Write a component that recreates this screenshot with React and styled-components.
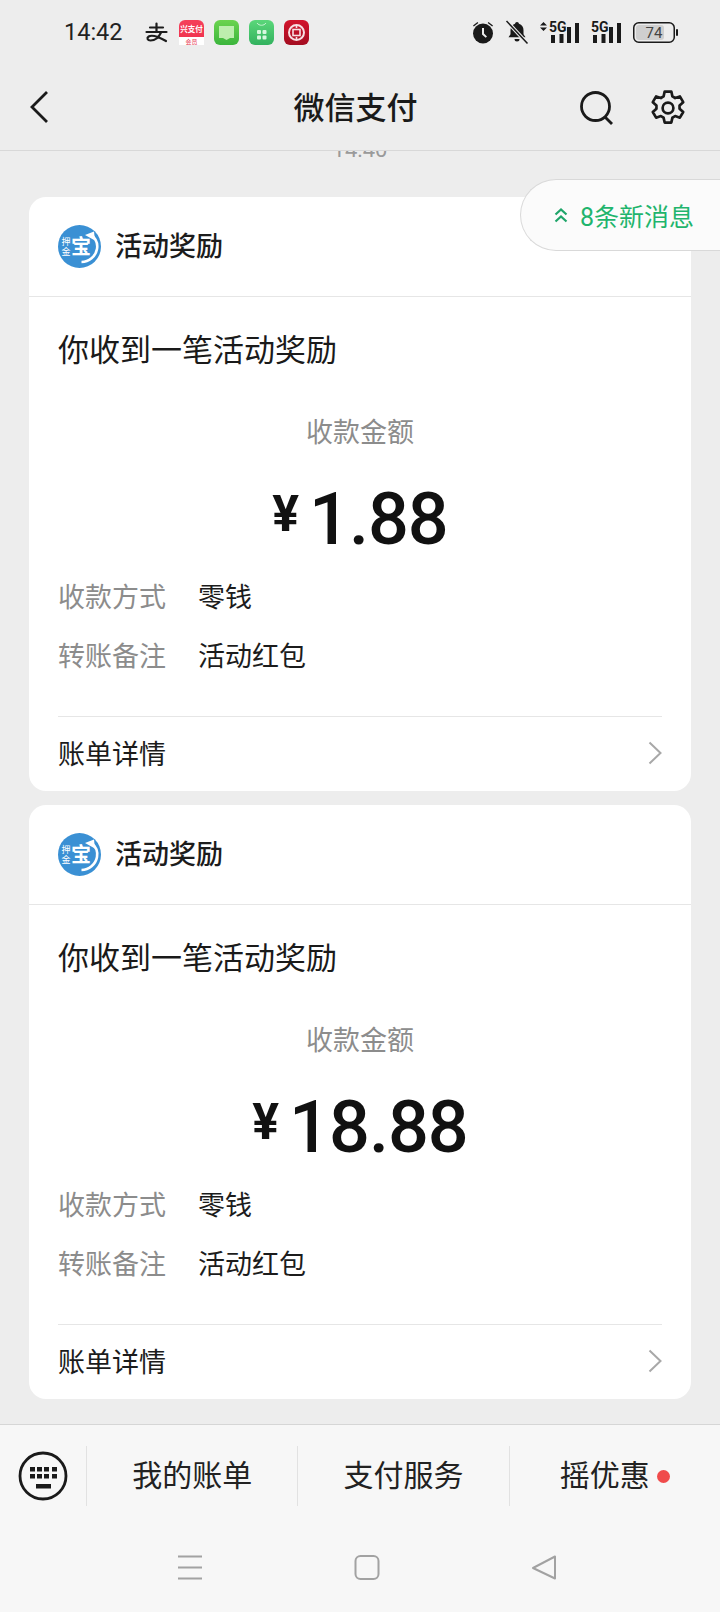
import React from 'react';
import styled, { createGlobalStyle } from 'styled-components';

const FONT = `Roboto, "Noto Sans CJK SC", sans-serif`;

const GlobalStyle = createGlobalStyle`
  html, body {
    margin: 0;
    padding: 0;
    background: #ededed;
  }
  * {
    box-sizing: border-box;
  }
`;

const Screen = styled.div`
  display: flex;
  flex-direction: column;
  width: 720px;
  height: 1612px;
  overflow: hidden;
  position: relative;
  background: #ededed;
  color: #1a1a1a;
  font-family: ${FONT};
`;

const StatusBar = styled.div`
  display: flex;
  align-items: center;
  flex: none;
  height: 64px;
  padding: 0 41px 0 64px;
`;

const Clock = styled.span`
  font-size: 23.5px;
  line-height: 28px;
  width: 80px;
  color: #222;
`;

const AppIcons = styled.div`
  display: flex;
  align-items: center;
  gap: 10px;
`;

const SysIcons = styled.div`
  display: flex;
  align-items: center;
  gap: 11px;
  margin-left: auto;
`;

const NavBar = styled.header`
  display: flex;
  align-items: center;
  flex: none;
  height: 87px;
  padding: 0 33px 0 27px;
  border-bottom: 1px solid #d8d8d8;
`;

const NavTitle = styled.h1`
  flex: 1;
  margin: 3px 0 0;
  padding-left: 81px;
  font-size: 31px;
  font-weight: 500;
  line-height: 40px;
  text-align: center;
  color: #1a1a1a;
`;

const NavActions = styled.div`
  display: flex;
  align-items: center;
  gap: 34px;
  margin-top: 2px;
`;

const Messages = styled.main`
  display: flex;
  flex-direction: column;
  flex: 1;
  min-height: 0;
  gap: 14px;
  padding: 0 29px;
  overflow: hidden;
`;

const Timestamp = styled.div`
  flex: none;
  height: 30px;
  margin-top: -16px;
  margin-bottom: 18px;
  font-size: 22px;
  line-height: 30px;
  text-align: center;
  color: #9a9a9a;
`;

const Card = styled.article`
  flex: none;
  height: 594px;
  border-radius: 17px;
  background: #fff;
`;

const CardHead = styled.div`
  display: flex;
  align-items: center;
  gap: 14px;
  height: 100px;
  padding: 0 29px;
  border-bottom: 1px solid #e6e6e6;
`;

const CardName = styled.span`
  font-size: 27px;
  font-weight: 500;
  line-height: 36px;
  color: #1c1c1c;
`;

const CardBody = styled.div`
  display: flex;
  flex-direction: column;
  height: 419px;
  padding: 33px 29px 0;
`;

const Headline = styled.div`
  font-size: 31px;
  line-height: 42px;
  color: #1a1a1a;
`;

const AmountLabel = styled.div`
  margin-top: 43px;
  font-size: 27px;
  line-height: 36px;
  text-align: center;
  color: #8c8c8c;
`;

const AmountRow = styled.div`
  display: flex;
  align-items: center;
  justify-content: center;
  gap: 10px;
  height: 86px;
  margin-top: 26px;
`;

const Yen = styled.span`
  font-size: 50px;
  font-weight: 700;
  line-height: 50px;
  margin-top: -13px;
  color: #111;
`;

const Amount = styled.span`
  font-size: 72px;
  font-weight: 500;
  line-height: 86px;
  letter-spacing: -1px;
  color: #111;
`;

const InfoRow = styled.div`
  display: flex;
  align-items: center;
  height: 36px;
  margin-top: ${props => props.$gap}px;
  font-size: 27px;
  line-height: 36px;
`;

const InfoLabel = styled.span`
  width: 140px;
  color: #8c8c8c;
`;

const InfoValue = styled.span`
  color: #1c1c1c;
`;

const DetailRow = styled.div`
  display: flex;
  align-items: center;
  justify-content: space-between;
  height: 72px;
  margin: 0 29px;
  border-top: 1px solid #e6e6e6;
  font-size: 27px;
  color: #1c1c1c;
`;

const NewMessages = styled.div`
  display: flex;
  align-items: center;
  gap: 12px;
  position: absolute;
  top: 179px;
  right: 0;
  width: 200px;
  height: 72px;
  padding-left: 33px;
  border: 1px solid #d9d9d9;
  border-right: 0;
  border-radius: 36px 0 0 36px;
  background: #fbfbfb;
  color: #1fb56d;
  font-size: 25px;
`;

const BottomBar = styled.footer`
  flex: none;
  height: 188px;
  border-top: 1px solid #d6d6d6;
  background: #f7f7f7;
`;

const MenuRow = styled.div`
  display: flex;
  align-items: center;
  height: 100px;
  padding-top: 2px;
`;

const KeyboardButton = styled.div`
  display: flex;
  align-items: center;
  justify-content: center;
  flex: none;
  width: 86px;
  height: 60px;
`;

const MenuItem = styled.div`
  display: flex;
  align-items: center;
  justify-content: center;
  gap: 7px;
  flex: 1;
  height: 60px;
  border-left: 1px solid #e2e2e2;
  font-size: 30px;
  line-height: 40px;
  color: #222;
`;

const RedDot = styled.span`
  width: 13px;
  height: 13px;
  border-radius: 50%;
  background: #f04b4b;
`;

const SoftKeys = styled.div`
  display: flex;
  align-items: center;
  justify-content: space-between;
  height: 52px;
  margin-top: 16px;
  padding: 0 163px 0 177px;
`;

const BackIcon = () => (
  <svg width="24" height="34" viewBox="0 0 24 34" fill="none" stroke="#1a1a1a" strokeWidth="2.8">
    <path d="M20 2 5 17l15 15" />
  </svg>
);

const SearchIcon = () => (
  <svg width="36" height="36" viewBox="0 0 36 36" fill="none" stroke="#1a1a1a" strokeWidth="2.8">
    <circle cx="16.5" cy="16.5" r="14" />
    <path d="m26 27 7 7" />
  </svg>
);

const GearIcon = () => (
  <svg width="38" height="38" viewBox="0 0 24 24" fill="none" stroke="#1a1a1a" strokeWidth="1.7" strokeLinejoin="round">
    <circle cx="12" cy="12" r="3.4" />
    <path d="M9.9 1.6h4.2l.7 3.1 1.7 1 3-1 2.1 3.6-2.3 2.1v2l2.3 2.1-2.1 3.6-3-1-1.7 1-.7 3.1H9.900l-.7-3.100-1.700-1-3 1-2.100-3.600 2.300-2.100v-2L2.400 8.300l2.100-3.600 3 1 1.700-1z" />
  </svg>
);

const AlipayMark = () => (
  <svg width="25" height="25" viewBox="0 0 25 25" fill="none" stroke="#1c1c1c" strokeWidth="2.2" strokeLinecap="round">
    <path d="M6 7.500h13M12.500 3.500v8M2.500 12h20" />
    <path d="M17 12.500c-2 4.500-6 8-10.500 8-3 0-4-2.500-1.800-4 2.500-1.600 9-.2 17.300 4.500" />
  </svg>
);

const AppTile = ({ from, to, children }) => (
  <svg width="25" height="25" viewBox="0 0 25 25">
    <defs>
      <linearGradient id={from.slice(1)} x1="0" y1="0" x2="0" y2="1">
        <stop offset="0" stopColor={from} />
        <stop offset="1" stopColor={to} />
      </linearGradient>
    </defs>
    <rect width="25" height="25" rx="6" fill={`url(#${from.slice(1)})`} />
    {children}
  </svg>
);

const AlarmIcon = () => (
  <svg width="22" height="24" viewBox="0 0 22 24" fill="#1a1a1a">
    <circle cx="11" cy="13.500" r="10" />
    <path d="M1 5.500 5.500 2l.8 1L1.800 6.500zM21 5.500 16.500 2l-.8 1 4.500 3.500z" />
    <path d="M10 8h2v5.500l3 3-1.300 1.200L10 14.500z" fill="#ededed" />
  </svg>
);

const MutedBell = () => (
  <svg width="24" height="24" viewBox="0 0 24 24" fill="#1a1a1a">
    <path d="M12 2a2 2 0 0 1 2 1.700c3 .9 4.500 3.500 4.500 6.500v4l2 3H3.500l2-3v-4c0-3 1.500-5.600 4.500-6.500A2 2 0 0 1 12 2z" />
    <path d="M9.500 19h5a2.500 2.500 0 0 1-5 0z" />
    <path d="M2 1.500 22 23" stroke="#ededed" strokeWidth="3.600" />
    <path d="M1.500 1 22.500 23.500" stroke="#1a1a1a" strokeWidth="1.500" />
  </svg>
);

const SignalIcon = ({ arrows }) => (
  <svg width={arrows ? 40 : 31} height="31" viewBox={arrows ? '0 -4 40 31' : '9 -4 31 31'} fill="#1a1a1a">
    {arrows && <path d="M3.500 1 7 4.500H0zM3.500 10 7 6.500H0z" />}
    <text x="9" y="11" fontFamily="Roboto, sans-serif" fontSize="14" fontWeight="700">5G</text>
    <rect x="11" y="14" width="4" height="8" />
    <rect x="19.500" y="13" width="4" height="9" />
    <rect x="27" y="6" width="4" height="16" />
    <rect x="35" y="2" width="4" height="20" />
  </svg>
);

const BatteryIcon = () => (
  <svg width="46" height="21" viewBox="0 0 46 21">
    <rect x=".75" y=".75" width="40.500" height="19.500" rx="5" fill="none" stroke="#1a1a1a" strokeWidth="1.500" />
    <rect x="3" y="3" width="28" height="15" rx="3" fill="#cfcfcf" />
    <rect x="43" y="7" width="2" height="7" rx="1" fill="#1a1a1a" />
    <text x="21" y="16" textAnchor="middle" fontFamily="Roboto, sans-serif" fontSize="15" fill="#444">74</text>
  </svg>
);

const BrandLogo = () => (
  <svg width="43" height="43" viewBox="0 0 43 43">
    <circle cx="21.500" cy="21.500" r="21.500" fill="#3a90d4" />
    <path d="M33 9.500c5 4 7 9 6 14.500-1.400 7.500-8 13-15.500 13" fill="none" stroke="#fff" strokeWidth="2.600" />
    <path d="m27 10 9-3.500 1 9z" fill="#fff" />
    <text x="23" y="29" textAnchor="middle" fontFamily="Noto Sans CJK SC" fontSize="20" fontWeight="700" fill="#fff">宝</text>
    <text x="8" y="20" textAnchor="middle" fontFamily="Noto Sans CJK SC" fontSize="9" fill="#fff">押</text>
    <text x="8" y="30" textAnchor="middle" fontFamily="Noto Sans CJK SC" fontSize="9" fill="#fff">金</text>
  </svg>
);

const Chevron = () => (
  <svg width="14" height="24" viewBox="0 0 14 24" fill="none" stroke="#a8a8a8" strokeWidth="2">
    <path d="m1.500 1.500 11 10.500-11 10.500" />
  </svg>
);

const DoubleUp = () => (
  <svg width="14" height="15" viewBox="0 0 14 15" fill="none" stroke="#1fa56a" strokeWidth="2.200">
    <path d="m1.500 6.500 5.500-5 5.500 5M1.500 13.500l5.500-5 5.500 5" />
  </svg>
);

const KeyboardIcon = () => (
  <svg width="50" height="50" viewBox="0 0 50 50" fill="#1a1a1a">
    <circle cx="25" cy="25" r="23" fill="none" stroke="#1a1a1a" strokeWidth="2.800" />
    {[12, 19, 26, 34].map(x => (
      <React.Fragment key={x}>
        <rect x={x} y="16" width="5" height="4.500" />
        <rect x={x} y="23" width="5" height="4.500" />
      </React.Fragment>
    ))}
    <rect x="18" y="33" width="15" height="4.500" />
  </svg>
);

const MenuKey = () => (
  <svg width="26" height="25" viewBox="0 0 26 25" fill="none" stroke="#a2a2a2" strokeWidth="2">
    <path d="M1 1.500h24M1 12.500h24M1 23.500h24" />
  </svg>
);

const HomeKey = () => (
  <svg width="26" height="25" viewBox="0 0 26 25" fill="none" stroke="#a2a2a2" strokeWidth="2">
    <rect x="1.500" y="1" width="23" height="23" rx="5" />
  </svg>
);

const BackKey = () => (
  <svg width="26" height="25" viewBox="0 0 26 25" fill="none" stroke="#a2a2a2" strokeWidth="2" strokeLinejoin="round">
    <path d="M24 1.500v22L2 13z" />
  </svg>
);

const RewardCard = ({ amount }) => (
  <Card>
    <CardHead>
      <BrandLogo />
      <CardName>活动奖励</CardName>
    </CardHead>
    <CardBody>
      <Headline>你收到一笔活动奖励</Headline>
      <AmountLabel>收款金额</AmountLabel>
      <AmountRow>
        <Yen>¥</Yen>
        <Amount>{amount}</Amount>
      </AmountRow>
      <InfoRow $gap={17}>
        <InfoLabel>收款方式</InfoLabel>
        <InfoValue>零钱</InfoValue>
      </InfoRow>
      <InfoRow $gap={23}>
        <InfoLabel>转账备注</InfoLabel>
        <InfoValue>活动红包</InfoValue>
      </InfoRow>
    </CardBody>
    <DetailRow>
      账单详情
      <Chevron />
    </DetailRow>
  </Card>
);

export default function App() {
  return (
    <>
      <GlobalStyle />
      <Screen>
        <StatusBar>
          <Clock>14:42</Clock>
          <AppIcons>
            <AlipayMark />
            <AppTile from="#f5405a" to="#ee2f4c">
              <rect y="17" width="25" height="8" fill="#fff" />
              <text x="12.500" y="12" textAnchor="middle" fontFamily="Noto Sans CJK SC" fontSize="7.500" fontWeight="700" fill="#fff">兴支付</text>
              <text x="12.500" y="23.500" textAnchor="middle" fontFamily="Noto Sans CJK SC" fontSize="6" fill="#e8364f">会员</text>
            </AppTile>
            <AppTile from="#6bd44f" to="#3bb53c">
              <path d="M5 6h15v12h-4l-3.500 2-3.500-2H5z" fill="#bdeeae" />
            </AppTile>
            <AppTile from="#5bd77a" to="#33b25f">
              <path d="M8 3c2 3 7 3 9 0" fill="none" stroke="#c8f2d2" strokeWidth="1" />
              <rect x="8" y="10" width="4" height="4" rx="1" fill="#d8f7df" />
              <rect x="13.500" y="10" width="4" height="4" rx="1" fill="#d8f7df" />
              <rect x="8" y="15.500" width="4" height="4" rx="1" fill="#d8f7df" />
              <rect x="13.500" y="15.500" width="4" height="4" rx="1" fill="#d8f7df" />
            </AppTile>
            <AppTile from="#d3142c" to="#a30d20">
              <circle cx="12.500" cy="12.500" r="7.500" fill="none" stroke="#f7dfe2" strokeWidth="2" />
              <rect x="9" y="9.500" width="7" height="6" fill="none" stroke="#f7dfe2" strokeWidth="1.600" />
              <path d="M12.500 5v3M12.500 17v3" stroke="#f7dfe2" strokeWidth="1.600" />
            </AppTile>
          </AppIcons>
          <SysIcons>
            <AlarmIcon />
            <MutedBell />
            <SignalIcon arrows />
            <SignalIcon />
            <BatteryIcon />
          </SysIcons>
        </StatusBar>
        <NavBar>
          <BackIcon />
          <NavTitle>微信支付</NavTitle>
          <NavActions>
            <SearchIcon />
            <GearIcon />
          </NavActions>
        </NavBar>
        <Messages>
          <Timestamp>14:40</Timestamp>
          <RewardCard amount="1.88" />
          <RewardCard amount="18.88" />
        </Messages>
        <NewMessages>
          <DoubleUp />
          8条新消息
        </NewMessages>
        <BottomBar>
          <MenuRow>
            <KeyboardButton>
              <KeyboardIcon />
            </KeyboardButton>
            <MenuItem>我的账单</MenuItem>
            <MenuItem>支付服务</MenuItem>
            <MenuItem>
              摇优惠
              <RedDot />
            </MenuItem>
          </MenuRow>
          <SoftKeys>
            <MenuKey />
            <HomeKey />
            <BackKey />
          </SoftKeys>
        </BottomBar>
      </Screen>
    </>
  );
}
